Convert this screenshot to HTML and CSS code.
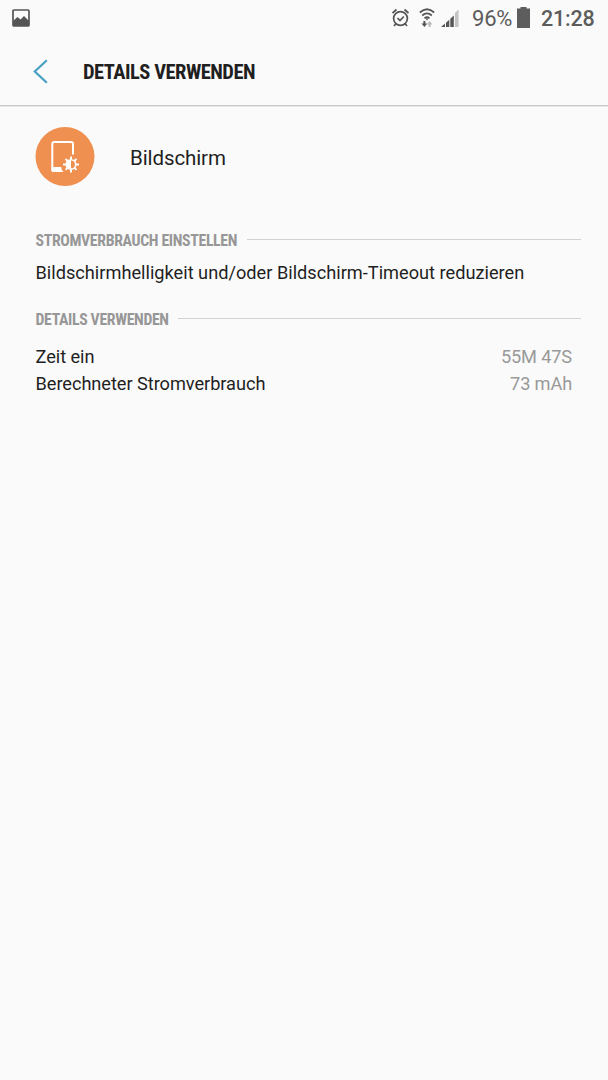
FILE: index.html
```html
<!DOCTYPE html>
<html lang="de">
<head>
<meta charset="utf-8">
<title>Details verwenden</title>
<link rel="stylesheet" href="styles.css">
</head>
<body>
<div class="status">
  <svg class="picture" width="18" height="18" viewBox="0 0 18 18"><rect x="1" y="1" width="16" height="16" rx="1" fill="none" stroke="#555" stroke-width="1.7"/><path d="M1 12L5.500 8L8.500 10.500L12 7L17 12V17H1Z" fill="#555"/></svg>
  <svg class="alarm" width="18" height="20" viewBox="0 0 18 20" fill="none" stroke="#555" stroke-width="1.7"><circle cx="8.500" cy="10.500" r="6.900"/><path d="M.5 5L4.500 1.500M16.500 5L12.500 1.500M4 15.500L2 18M13 15.500L15 18M5.500 10L8 12.500L11.800 8.500"/></svg>
  <svg class="wifi" width="16" height="20" viewBox="0 0 16 20"><path d="M.8 4.500Q8-2 15.200 4.500M3.200 7.500Q8 3.200 12.800 7.500M5.500 10.300Q8 8.200 10.500 10.300" fill="none" stroke="#555" stroke-width="1.700"/><path d="M6.500 10.500h3L8 12.500Z" fill="#555"/><path d="M4.400 13h2v2.500h1.900L5.400 19L2.500 15.500h1.900Z" fill="#555"/><path d="M9.600 19h2v-2.500h1.900L10.600 13L7.700 16.500h1.900Z" fill="#bbb"/></svg>
  <svg class="signal" width="19" height="19" viewBox="0 0 19 19" fill="#555"><path d="M0 18L4 14.500V18ZM5 13.700L8.300 10.700V18H5ZM9.300 9.800L12.800 6.600V18H9.300Z"/><path d="M13.900 4L17.600 .5V18H13.900Z" fill="#c4c4c4"/></svg>
  <span class="percent">96%</span>
  <svg class="battery" width="14" height="22" viewBox="0 0 14 22"><path d="M4.500 0h6v1.500H14V21H1V1.500h3.500Z" fill="#5d5d5d"/></svg>
  <span class="clock">21:28</span>
</div>
<header class="bar">
  <svg class="back" width="16" height="25" viewBox="0 0 16 25"><path d="M13.800 1.300L1.800 12.500L13.800 23.700" fill="none" stroke="#479fc1" stroke-width="2.200"/></svg>
  <h1 class="title">DETAILS VERWENDEN</h1>
</header>
<main class="content">
  <div class="item">
    <svg class="badge" width="60" height="60" viewBox="0 0 60 60"><circle cx="30" cy="29.500" r="29.500" fill="#ef8f50"/><path d="M38 27.500V17Q38 15 36 15H19.300Q17.300 15 17.300 17V42.500Q17.300 44 18.500 44" fill="none" stroke="#fff" stroke-width="2"/><path d="M16.300 40H26.200Q26.200 43 28.500 44.900H18.300Q16.300 44.900 16.300 43Z" fill="#fff"/><g transform="translate(36 37.400)"><path d="M0-8V8M-8 0H8M-5.500-5.500L5.500 5.500M-5.500 5.500L5.500-5.500" stroke="#fff" stroke-width="2"/><circle r="4.700" fill="#ef8f50" stroke="#fff" stroke-width="1.600"/><path d="M0-4.500A4.500 4.500 0 0 0 0 4.500Z" fill="#fff"/></g></svg>
    <span class="name">Bildschirm</span>
  </div>
  <h2 class="section"><span class="label">STROMVERBRAUCH EINSTELLEN</span></h2>
  <p class="hint">Bildschirmhelligkeit und/oder Bildschirm-Timeout reduzieren</p>
  <h2 class="section second"><span class="label">DETAILS VERWENDEN</span></h2>
  <div class="rows">
    <div class="row"><span>Zeit ein</span><span class="value">55M 47S</span></div>
    <div class="row"><span>Berechneter Stromverbrauch</span><span class="value">73 mAh</span></div>
  </div>
</main>
</body>
</html>
```
FILE: styles.css
```css
body { margin: 0; height: 1080px; background: #fafafa; color: #1f1f1f; font-family: Roboto, sans-serif; overflow: hidden; }
svg { display: block; flex: none; }
.status { display: flex; align-items: center; height: 36px; padding: 0 14px 0 12px; color: #5c5c5c; white-space: nowrap; }
.picture { margin-right: auto; }
.alarm { margin-right: 9px; }
.wifi { margin-right: 6px; }
.signal { margin-right: 12px; }
.percent { width: 44px; padding-top: 1px; font-size: 22px; letter-spacing: -0.2px; }
.battery { margin-right: 11px; }
.clock { width: 53px; padding-top: 1px; font-size: 21.5px; font-weight: 500; letter-spacing: -0.2px; }
.bar { display: flex; align-items: center; height: 69px; padding: 0 0 0 33px; border-bottom: 1px solid #cacaca; box-shadow: 0 1px 0 #e6e6e6; }
.back { margin: 1px 34px 0 0; }
.title { margin: 0; padding-top: 2px; font: 700 20.5px/24px "Roboto Condensed", Roboto, sans-serif; font-stretch: 75%; letter-spacing: -0.5px; white-space: nowrap; }
.content { padding: 21px 27px 0 35px; }
.item { display: flex; align-items: center; height: 60px; gap: 35px; }
.name { padding-top: 1px; font-size: 20.5px; letter-spacing: -0.1px; }
.section { display: flex; align-items: center; margin: 42px 0 0; height: 22px; font: 700 15.8px/20px "Roboto Condensed", Roboto, sans-serif; font-stretch: 75%; letter-spacing: -0.35px; color: #979797; white-space: nowrap; }
.label { padding: 2px 0 0 0.5px; }
.section::after { content: ""; flex: 1; height: 1px; margin: 0 0 2px 9.5px; background: #d2d2d2; }
.hint { margin: 9px 0 0; padding-left: 0.5px; font-size: 18.2px; line-height: 26px; white-space: nowrap; }
.section.second { margin-top: 22px; }
.rows { padding: 13px 9px 0 0.5px; }
.row { display: flex; justify-content: space-between; font-size: 18.2px; line-height: 27px; letter-spacing: -0.05px; }
.value { color: #999; letter-spacing: -0.15px; }
```
